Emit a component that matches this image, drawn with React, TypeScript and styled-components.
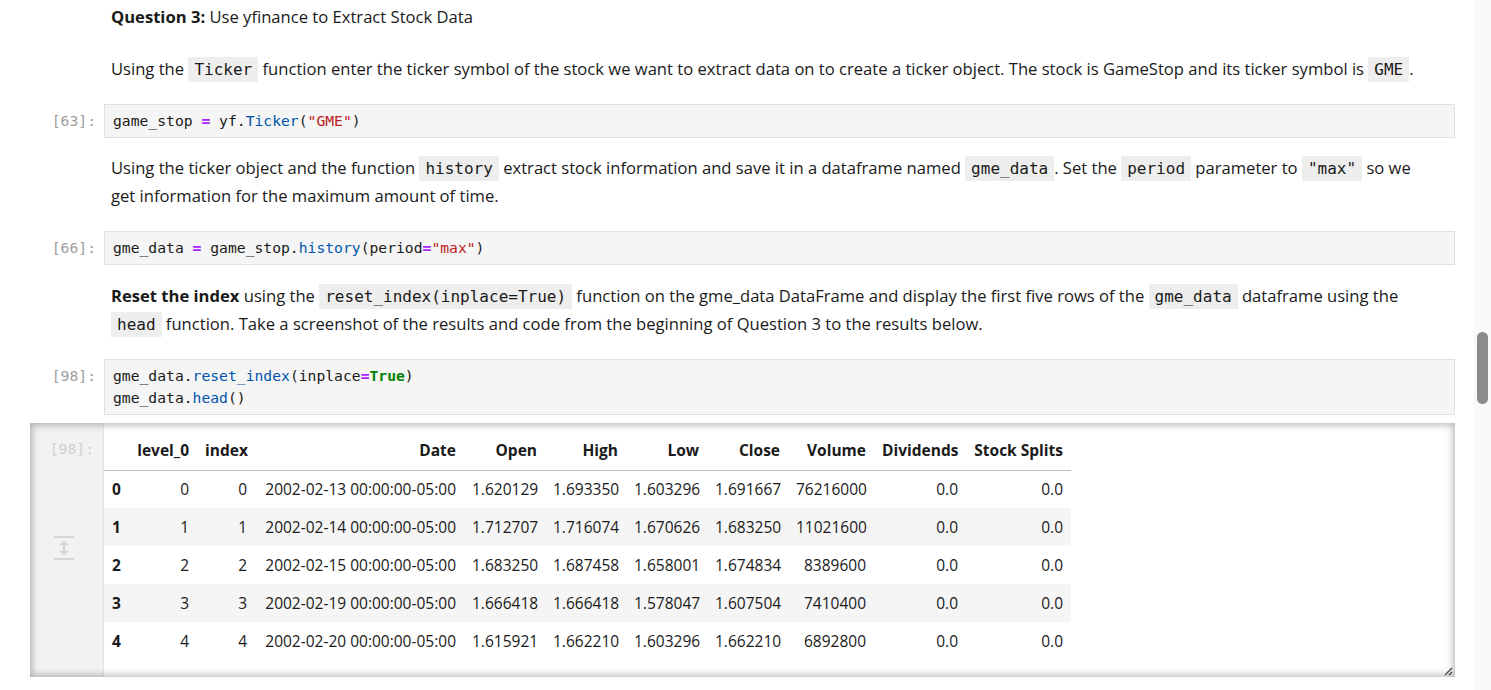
import React from 'react'
import styled, { createGlobalStyle } from 'styled-components'

const GlobalStyle = createGlobalStyle`
  html, body {
    margin: 0;
    padding: 0;
    background: #fff;
    overflow: hidden;
  }
  body {
    font-family: 'Open Sans', 'Noto Sans', sans-serif;
    color: #1a1a1a;
  }
`

const Page = styled.div`
  display: flex;
  width: 1491px;
  height: 690px;
`

const Notebook = styled.main`
  flex: 1;
  display: flex;
  flex-direction: column;
  padding: 3px 19px 0 0;
  min-width: 0;
`

const ScrollTrack = styled.div`
  width: 17px;
  flex: none;
  background: #f9f9f9;
  display: flex;
  justify-content: center;
`

const ScrollThumb = styled.div`
  margin-top: 332px;
  width: 11px;
  height: 72px;
  border-radius: 6px;
  background: #8b8b8b;
`

const Cell = styled.div<{ $gap?: number }>`
  display: grid;
  grid-template-columns: 104px 1fr;
  margin-top: ${p => p.$gap ?? 0}px;
`

const Prompt = styled.div`
  font-family: 'DejaVu Sans Mono', monospace;
  font-size: 14.7px;
  line-height: 22px;
  color: #9e9e9e;
  text-align: right;
  padding: 6px 8px 0 0;
`

const Markdown = styled.div`
  grid-column: 2;
  padding: 0 20px 0 7px;
  font-size: 16.6px;
  line-height: 28px;

  p {
    margin: 0;
  }
  b {
    font-weight: 700;
  }
`

const InlineCode = styled.code`
  font-family: 'DejaVu Sans Mono', monospace;
  font-size: 16px;
  line-height: 1;
  background: #eeeeee;
  padding: 3px 6px;
  color: #1a1a1a;
`

const CodeBox = styled.pre`
  margin: 0;
  background: #f5f5f5;
  border: 1px solid #e0e0e0;
  padding: 5px 8px;
  font-family: 'DejaVu Sans Mono', monospace;
  font-size: 14.7px;
  line-height: 22px;
  color: #1a1a1a;
`

const Op = styled.span`
  color: #aa22ff;
  font-weight: 700;
`

const Attr = styled.span`
  color: #0055aa;
`

const Str = styled.span`
  color: #ba2121;
`

const Kw = styled.span`
  color: #008000;
  font-weight: 700;
`

const OutputArea = styled.div`
  position: relative;
  display: flex;
  height: 254px;
  margin: 8px 0 0 30px;

  &::after {
    content: '';
    position: absolute;
    inset: 0;
    box-shadow: inset 0 0 7px 2px rgba(0, 0, 0, 0.28);
    pointer-events: none;
  }
`

const OutputPrompt = styled.div`
  width: 74px;
  flex: none;
  display: flex;
  flex-direction: column;
  background: #f2f2f2;
  border-right: 1px solid #e4e4e4;
  box-sizing: border-box;
`

const OutputLabel = styled.div`
  font-family: 'DejaVu Sans Mono', monospace;
  font-size: 14.7px;
  line-height: 22px;
  color: #cfcfcf;
  text-align: right;
  padding: 15px 9px 0 0;
`

const CollapseIcon = styled.svg`
  margin: 76px 0 0 24px;
`

const TableWrap = styled.div`
  flex: 1;
  padding-top: 8px;
  background: #fff;
`

const Table = styled.table`
  border-collapse: collapse;
  table-layout: fixed;
  width: 967px;
  font-size: 15.5px;
  color: #1a1a1a;
`

const Col = styled.col<{ $w: number }>`
  width: ${p => p.$w}px;
`

const HeadRow = styled.tr`
  height: 39px;
  border-bottom: 1px solid #bdbdbd;
`

const Row = styled.tr`
  height: 38px;
  &:nth-child(even) {
    background: #f5f5f5;
  }
`

const HeadCell = styled.th`
  padding: 0 8px;
  text-align: right;
  font-weight: 700;
  white-space: nowrap;
  vertical-align: middle;
`

const IndexCell = styled.th`
  padding: 0 8px;
  text-align: left;
  font-weight: 700;
`

const DataCell = styled.td`
  padding: 0 8px;
  text-align: right;
  white-space: nowrap;
`

const ResizeGrip = styled.svg`
  position: absolute;
  right: 2px;
  bottom: 1px;
`

const widths = [25, 68, 58, 209, 81, 81, 81, 81, 86, 92, 105]
const headers = ['level_0', 'index', 'Date', 'Open', 'High', 'Low', 'Close', 'Volume', 'Dividends', 'Stock Splits']

const rows = [
  ['0', '0', '0', '2002-02-13 00:00:00-05:00', '1.620129', '1.693350', '1.603296', '1.691667', '76216000', '0.0', '0.0'],
  ['1', '1', '1', '2002-02-14 00:00:00-05:00', '1.712707', '1.716074', '1.670626', '1.683250', '11021600', '0.0', '0.0'],
  ['2', '2', '2', '2002-02-15 00:00:00-05:00', '1.683250', '1.687458', '1.658001', '1.674834', '8389600', '0.0', '0.0'],
  ['3', '3', '3', '2002-02-19 00:00:00-05:00', '1.666418', '1.666418', '1.578047', '1.607504', '7410400', '0.0', '0.0'],
  ['4', '4', '4', '2002-02-20 00:00:00-05:00', '1.615921', '1.662210', '1.603296', '1.662210', '6892800', '0.0', '0.0'],
]

const App = () => {
  return (
    <Page>
      <GlobalStyle />
      <Notebook>
        <Cell>
          <Markdown>
            <p>
              <b>Question 3:</b> Use yfinance to Extract Stock Data
            </p>
          </Markdown>
        </Cell>

        <Cell $gap={24}>
          <Markdown>
            <p>
              Using the <InlineCode>Ticker</InlineCode> function enter the ticker symbol of the stock we want to
              extract data on to create a ticker object. The stock is GameStop and its ticker symbol is{' '}
              <InlineCode>GME</InlineCode>.
            </p>
          </Markdown>
        </Cell>

        <Cell $gap={21}>
          <Prompt>[63]:</Prompt>
          <CodeBox>
            game_stop <Op>=</Op> yf.<Attr>Ticker</Attr>(<Str>"GME"</Str>)
          </CodeBox>
        </Cell>

        <Cell $gap={16}>
          <Markdown>
            <p>
              Using the ticker object and the function <InlineCode>history</InlineCode> extract stock information
              and save it in a dataframe named <InlineCode>gme_data</InlineCode>. Set the{' '}
              <InlineCode>period</InlineCode> parameter to <InlineCode>"max"</InlineCode> so we get information for
              the maximum amount of time.
            </p>
          </Markdown>
        </Cell>

        <Cell $gap={21}>
          <Prompt>[66]:</Prompt>
          <CodeBox>
            gme_data <Op>=</Op> game_stop.<Attr>history</Attr>(period<Op>=</Op>
            <Str>"max"</Str>)
          </CodeBox>
        </Cell>

        <Cell $gap={17}>
          <Markdown>
            <p>
              <b>Reset the index</b> using the <InlineCode>reset_index(inplace=True)</InlineCode> function on the
              gme_data DataFrame and display the first five rows of the <InlineCode>gme_data</InlineCode> dataframe
              using the <InlineCode>head</InlineCode> function. Take a screenshot of the results and code from the
              beginning of Question 3 to the results below.
            </p>
          </Markdown>
        </Cell>

        <Cell $gap={21}>
          <Prompt>[98]:</Prompt>
          <CodeBox>
            gme_data.<Attr>reset_index</Attr>(inplace<Op>=</Op>
            <Kw>True</Kw>){'\n'}gme_data.<Attr>head</Attr>()
          </CodeBox>
        </Cell>

        <OutputArea>
          <OutputPrompt>
            <OutputLabel>[98]:</OutputLabel>
            <CollapseIcon width="20" height="24" viewBox="0 0 20 24">
              <rect x="0" y="0" width="20" height="2" fill="#d6d6d6" />
              <rect x="0" y="22" width="20" height="2" fill="#d6d6d6" />
              <path d="M10 4 L14.5 9 H11.2 V15 H14.5 L10 20 L5.5 15 H8.8 V9 H5.5 Z" fill="#d6d6d6" />
            </CollapseIcon>
          </OutputPrompt>
          <TableWrap>
            <Table>
              <colgroup>
                {widths.map((w, i) => (
                  <Col key={i} $w={w} />
                ))}
              </colgroup>
              <thead>
                <HeadRow>
                  <HeadCell />
                  {headers.map(h => (
                    <HeadCell key={h}>{h}</HeadCell>
                  ))}
                </HeadRow>
              </thead>
              <tbody>
                {rows.map(r => (
                  <Row key={r[0]}>
                    <IndexCell>{r[0]}</IndexCell>
                    {r.slice(1).map((v, i) => (
                      <DataCell key={i}>{v}</DataCell>
                    ))}
                  </Row>
                ))}
              </tbody>
            </Table>
          </TableWrap>
          <ResizeGrip width="10" height="10" viewBox="0 0 10 10">
            <path d="M9 2 L2 9 M9 6 L6 9" stroke="#555" strokeWidth="1.4" fill="none" />
          </ResizeGrip>
        </OutputArea>
      </Notebook>
      <ScrollTrack>
        <ScrollThumb />
      </ScrollTrack>
    </Page>
  )
}

export default App
